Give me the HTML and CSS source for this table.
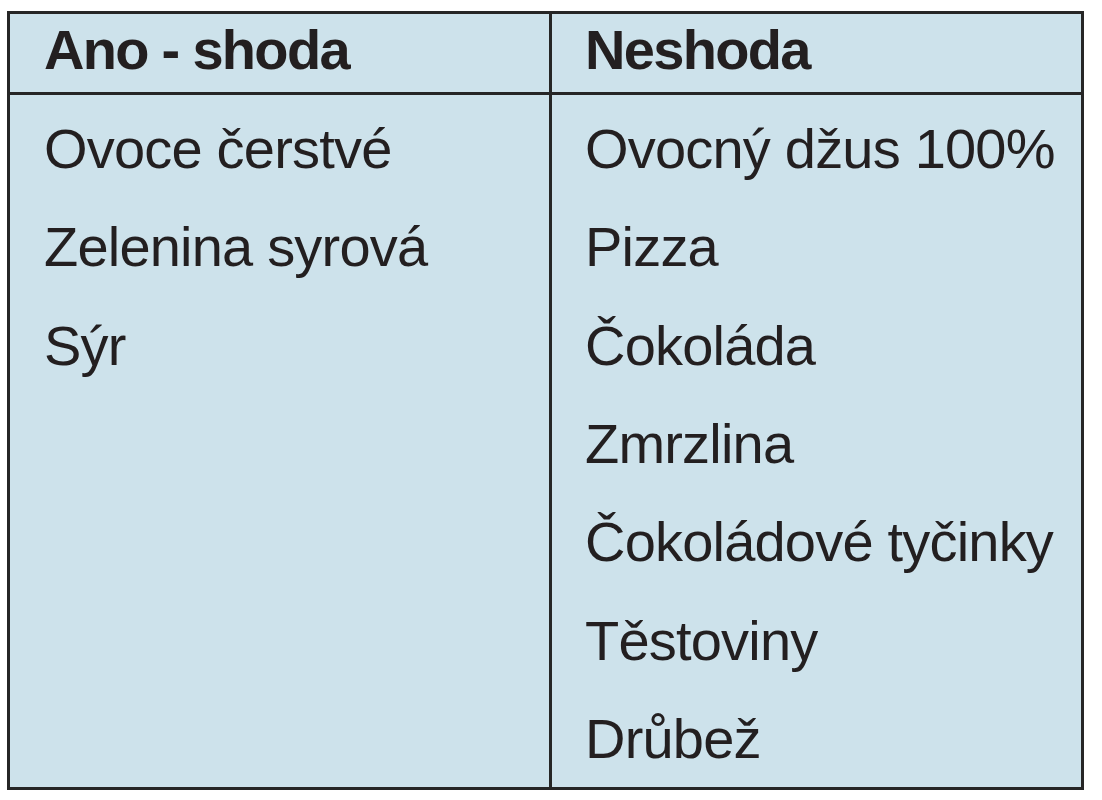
FILE: index.html
```html
<!DOCTYPE html>
<html lang="cs">
<head>
<meta charset="utf-8">
<title>Ano - shoda / Neshoda</title>
<link rel="stylesheet" href="styles.css">
</head>
<body>
<div class="table">
  <div class="cell head left">Ano - shoda</div>
  <div class="cell head right">Neshoda</div>
  <div class="cell body left">
    <div class="line">Ovoce čerstvé</div>
    <div class="line">Zelenina syrová</div>
    <div class="line">Sýr</div>
  </div>
  <div class="cell body right">
    <div class="line">Ovocný džus 100%</div>
    <div class="line">Pizza</div>
    <div class="line">Čokoláda</div>
    <div class="line">Zmrzlina</div>
    <div class="line">Čokoládové tyčinky</div>
    <div class="line">Těstoviny</div>
    <div class="line">Drůbež</div>
  </div>
  <span class="tick"></span>
</div>
</body>
</html>
```
FILE: styles.css
```css
html, body {
  margin: 0;
  padding: 0;
  background: #ffffff;
}
body {
  padding: 11px 0 0 7px;
  font-family: "Liberation Sans", Arial, sans-serif;
  color: #231f20;
}
.table {
  position: relative;
  box-sizing: border-box;
  width: 1077px;
  height: 779px;
  border: 3px solid #262626;
  background: #cde2eb;
  display: grid;
  grid-template-columns: 542px 1fr;
  grid-template-rows: 81px 1fr;
}
.cell {
  box-sizing: border-box;
  font-size: 56px;
  letter-spacing: -0.8px;
}
.cell.left {
  border-right: 3px solid #262626;
  padding-left: 34px;
}
.cell.right {
  padding-left: 33px;
}
.head {
  border-bottom: 3px solid #262626;
  font-weight: 700;
  line-height: 72px;
  letter-spacing: -1.7px;
}
.body {
  padding-top: 5px;
}
.line {
  line-height: 98.33px;
  white-space: nowrap;
}
.tick {
  position: absolute;
  left: 539px;
  bottom: -6px;
  width: 3px;
  height: 4px;
  background: #262626;
}
```
